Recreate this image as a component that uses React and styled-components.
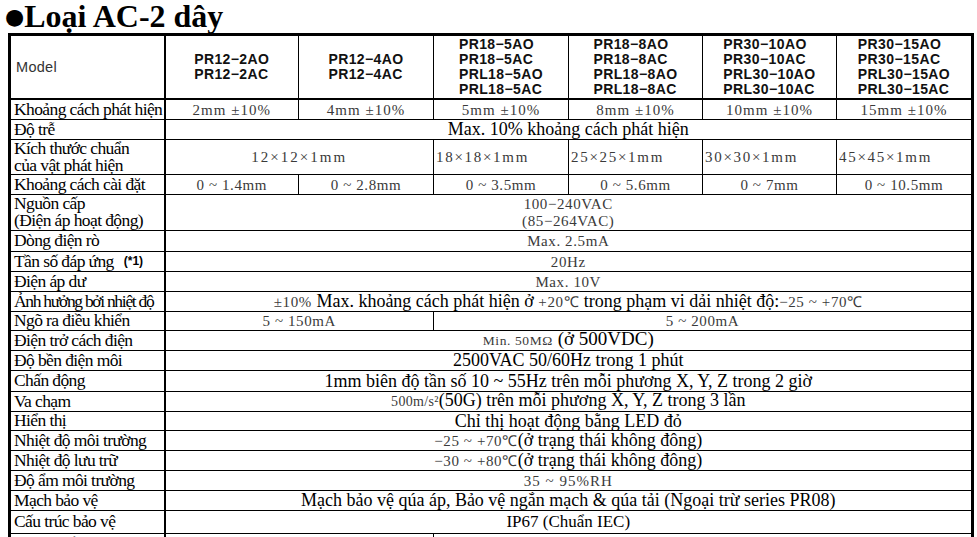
import styled, { createGlobalStyle } from "styled-components"

const GlobalStyle = createGlobalStyle`
  body {
    margin: 0;
    background: #fff;
  }
`

const Page = styled.div`
  width: 977px;
  height: 537px;
  overflow: hidden;
  padding-left: 8px;
  box-sizing: border-box;
`

const Title = styled.h1`
  margin: 0 0 0 -3px;
  height: 33px;
  font-family: "Liberation Serif", serif;
  font-weight: bold;
  font-size: 32px;
  line-height: 32px;
  color: #000;
  white-space: nowrap;
`

const Bullet = styled.span`
  font-family: "DejaVu Sans", sans-serif;
  font-size: 22px;
  vertical-align: 3px;
`

const Table = styled.table`
  border-collapse: collapse;
  table-layout: fixed;
  width: 966px;
  border: 3px solid #000;
  font-family: "Liberation Serif", serif;
`

const Row = styled.tr`
  height: ${p => p.$h}px;
`

const Label = styled.th`
  text-align: left;
  font-weight: normal;
  font-size: 17.5px;
  line-height: ${p => (p.$two ? 17 : 15)}px;
  padding: 0 0 0 3px;
  border: 1px solid #000;
  border-right: 2px solid #000;
  white-space: nowrap;
  color: #000;
  letter-spacing: ${p => (p.$tight ? "-1.3px" : "-0.6px")};
`

const ModelLabel = styled(Label)`
  font-family: "Liberation Sans", sans-serif;
  font-size: 14.5px;
  letter-spacing: 0.3px;
  color: #333;
  padding-left: 5px;
  border-bottom: 2px solid #000;
`

const Note = styled.span`
  font-family: "Liberation Sans", sans-serif;
  font-weight: bold;
  font-size: 12px;
  letter-spacing: 0;
  margin-left: 10px;
  vertical-align: 2px;
`

const HeadCell = styled.td`
  border: 1px solid #000;
  border-bottom: 2px solid #000;
  text-align: center;
  vertical-align: ${p => (p.$top ? "top" : "middle")};
  padding: ${p => (p.$top ? "1px 0 0" : "0")};
`

const Models = styled.div`
  display: inline-block;
  text-align: left;
  font-family: "Liberation Sans", sans-serif;
  font-weight: bold;
  font-size: 14px;
  line-height: 15px;
  letter-spacing: 0.4px;
  color: #111;
`

const Cell = styled.td`
  border: 1px solid #000;
  padding: 0 ${p => (p.$align === "left" ? "2px" : "0")};
  text-align: ${p => p.$align || "center"};
  font-size: ${p => p.$size || 18}px;
  line-height: ${p => p.$lh || 14}px;
  white-space: nowrap;
  color: #000;
`

const Thin = styled.span`
  font-size: ${p => p.$size || 15}px;
  color: #3a3a3a;
  letter-spacing: ${p => p.$ls ?? 0.6}px;
`

const models = [
  ["PR12−2AO", "PR12−2AC"],
  ["PR12−4AO", "PR12−4AC"],
  ["PR18−5AO", "PR18−5AC", "PRL18−5AO", "PRL18−5AC"],
  ["PR18−8AO", "PR18−8AC", "PRL18−8AO", "PRL18−8AC"],
  ["PR30−10AO", "PR30−10AC", "PRL30−10AO", "PRL30−10AC"],
  ["PR30−15AO", "PR30−15AC", "PRL30−15AO", "PRL30−15AC"],
]

const distances = ["2mm", "4mm", "5mm", "8mm", "10mm", "15mm"]
const settings = ["0 ~ 1.4mm", "0 ~ 2.8mm", "0 ~ 3.5mm", "0 ~ 5.6mm", "0 ~ 7mm", "0 ~ 10.5mm"]
const targets = ["18×18×1mm", "25×25×1mm", "30×30×1mm", "45×45×1mm"]

const App = () => {
  return (
    <Page>
      <GlobalStyle />
      <Title>
        <Bullet>●</Bullet>Loại AC-2 dây
      </Title>
      <Table>
        <colgroup>
          <col style={{ width: 155 }} />
          <col style={{ width: 134 }} />
          <col style={{ width: 135 }} />
          <col style={{ width: 135 }} />
          <col style={{ width: 134 }} />
          <col style={{ width: 134 }} />
          <col style={{ width: 136 }} />
        </colgroup>
        <tbody>
          <Row $h={61}>
            <ModelLabel>Model</ModelLabel>
            {models.map((m, i) => (
              <HeadCell key={i} $top={m.length > 2}>
                <Models>
                  {m.map(n => (
                    <div key={n}>{n}</div>
                  ))}
                </Models>
              </HeadCell>
            ))}
          </Row>
          <Row $h={20}>
            <Label>Khoảng cách phát hiện</Label>
            {distances.map(d => (
              <Cell key={d}>
                <Thin $ls={1}>{d} ±10%</Thin>
              </Cell>
            ))}
          </Row>
          <Row $h={20}>
            <Label>Độ trễ</Label>
            <Cell colSpan={6}>Max. 10% khoảng cách phát hiện</Cell>
          </Row>
          <Row $h={35}>
            <Label $two>
              Kích thước chuẩn
              <br />
              của vật phát hiện
            </Label>
            <Cell colSpan={2}>
              <Thin $ls={2}>12×12×1mm</Thin>
            </Cell>
            {targets.map(t => (
              <Cell key={t} $align="left">
                <Thin $ls={1.7}>{t}</Thin>
              </Cell>
            ))}
          </Row>
          <Row $h={20}>
            <Label>Khoảng cách cài đặt</Label>
            {settings.map(s => (
              <Cell key={s}>
                <Thin>{s}</Thin>
              </Cell>
            ))}
          </Row>
          <Row $h={36}>
            <Label $two>
              Nguồn cấp
              <br />
              (Điện áp hoạt động)
            </Label>
            <Cell colSpan={6} $lh={16}>
              <Thin>
                100−240VAC
                <br />
                (85−264VAC)
              </Thin>
            </Cell>
          </Row>
          <Row $h={21}>
            <Label>Dòng điện rò</Label>
            <Cell colSpan={6}>
              <Thin>Max. 2.5mA</Thin>
            </Cell>
          </Row>
          <Row $h={20}>
            <Label>
              Tần số đáp ứng<Note>(*1)</Note>
            </Label>
            <Cell colSpan={6}>
              <Thin>20Hz</Thin>
            </Cell>
          </Row>
          <Row $h={20}>
            <Label>Điện áp dư</Label>
            <Cell colSpan={6}>
              <Thin>Max. 10V</Thin>
            </Cell>
          </Row>
          <Row $h={20}>
            <Label $tight>Ảnh hưởng bởi nhiệt độ</Label>
            <Cell colSpan={6}>
              <Thin>±10%</Thin> Max. khoảng cách phát hiện ở <Thin>+20℃</Thin>
              {"  "}trong phạm vi dải nhiệt độ:<Thin>−25 ~ +70℃</Thin>
            </Cell>
          </Row>
          <Row $h={19}>
            <Label>Ngõ ra điều khiển</Label>
            <Cell colSpan={2}>
              <Thin>5 ~ 150mA</Thin>
            </Cell>
            <Cell colSpan={4}>
              <Thin>5 ~ 200mA</Thin>
            </Cell>
          </Row>
          <Row $h={20}>
            <Label>Điện trở cách điện</Label>
            <Cell colSpan={6} $size={19}>
              <Thin $size={13.5} $ls={0.6}>Min. 50MΩ</Thin> (ở 500VDC)
            </Cell>
          </Row>
          <Row $h={20}>
            <Label>Độ bền điện môi</Label>
            <Cell colSpan={6}>2500VAC 50/60Hz trong 1 phút</Cell>
          </Row>
          <Row $h={21}>
            <Label>Chấn động</Label>
            <Cell colSpan={6}>1mm biên độ tần số 10 ~ 55Hz trên mỗi phương X, Y, Z trong 2 giờ</Cell>
          </Row>
          <Row $h={20}>
            <Label>Va chạm</Label>
            <Cell colSpan={6}>
              <Thin $size={14} $ls={0.3}>500m/s²</Thin>(50G) trên mỗi phương X, Y, Z trong 3 lần
            </Cell>
          </Row>
          <Row $h={19}>
            <Label>Hiển thị</Label>
            <Cell colSpan={6}>Chỉ thị hoạt động bằng LED đỏ</Cell>
          </Row>
          <Row $h={20}>
            <Label>Nhiệt độ môi trường</Label>
            <Cell colSpan={6}>
              <Thin>−25 ~ +70℃</Thin>(ở trạng thái không đông)
            </Cell>
          </Row>
          <Row $h={20}>
            <Label>Nhiệt độ lưu trữ</Label>
            <Cell colSpan={6}>
              <Thin>−30 ~ +80℃</Thin>(ở trạng thái không đông)
            </Cell>
          </Row>
          <Row $h={20}>
            <Label>Độ ẩm môi trường</Label>
            <Cell colSpan={6}>
              <Thin $ls={1}>35 ~ 95%RH</Thin>
            </Cell>
          </Row>
          <Row $h={20}>
            <Label>Mạch bảo vệ</Label>
            <Cell colSpan={6}>
              Mạch bảo vệ qúa áp, Bảo vệ ngắn mạch &amp; qúa tải (Ngoại trừ series PR08)
            </Cell>
          </Row>
          <Row $h={23}>
            <Label>Cấu trúc bảo vệ</Label>
            <Cell colSpan={6} $size={17}>
              IP67 (Chuẩn IEC)
            </Cell>
          </Row>
          <Row $h={22}>
            <Label>Thông số dây cáp</Label>
            <Cell colSpan={2}>
              <Thin>Ø4mm, 2 dây, 2m</Thin>
            </Cell>
            <Cell colSpan={4}>
              <Thin>Ø5mm, 2 dây, 2m</Thin>
            </Cell>
          </Row>
        </tbody>
      </Table>
    </Page>
  )
}

export default App
